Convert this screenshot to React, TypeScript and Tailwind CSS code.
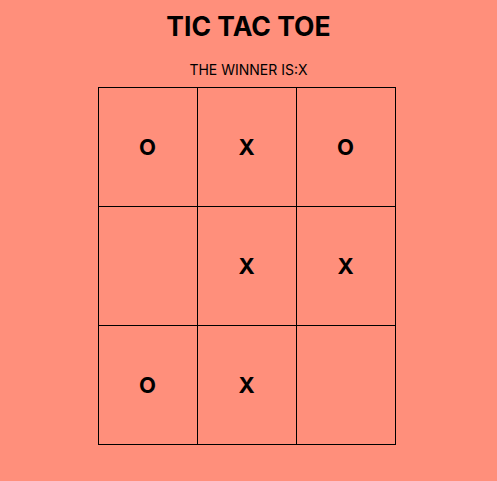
const board = ['O', 'X', 'O', '', 'X', 'X', 'O', 'X', ''];

export default function App() {
  return (
    <div
      className="min-h-screen bg-[#ff8f7b] flex flex-col items-center text-black"
      style={{ fontFamily: 'Inter, "Liberation Sans", sans-serif' }}
    >
      <h1 className="mt-[10px] text-[26.5px] leading-[32px] font-bold">TIC TAC TOE</h1>
      <p className="mt-[18px] text-[14px] leading-[20px]">THE WINNER IS:X</p>
      <div className="mt-[7px] mr-[4px] grid grid-cols-[repeat(3,98px)] grid-rows-[repeat(3,118px)] gap-px p-px bg-black">
        {board.map((v, i) => (
          <div key={i} className="bg-[#ff8f7b] flex items-center justify-center text-[22px] font-bold">
            {v}
          </div>
        ))}
      </div>
    </div>
  );
}
